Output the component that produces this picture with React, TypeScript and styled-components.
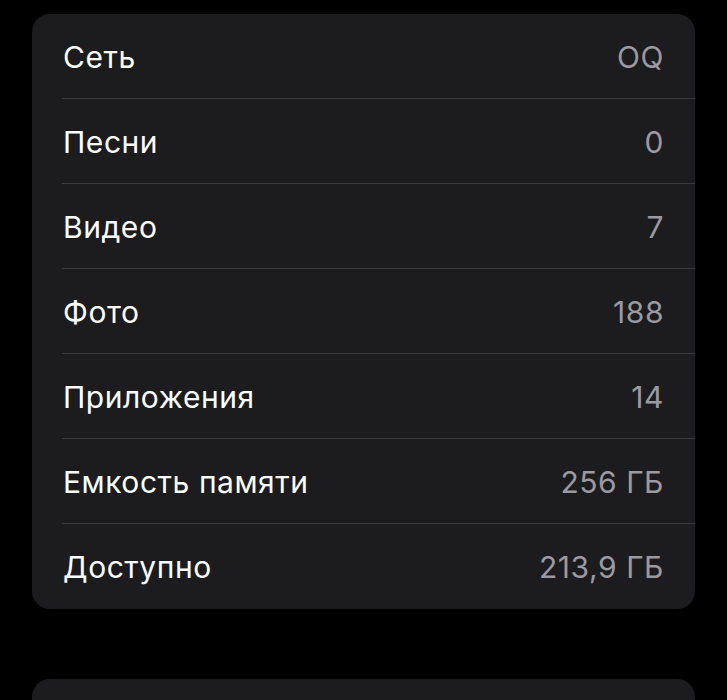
import styled, { createGlobalStyle } from 'styled-components';

const GlobalStyle = createGlobalStyle`
  html, body {
    margin: 0;
    padding: 0;
    background: #000000;
  }
  body {
    font-family: Inter, "Noto Sans", "Liberation Sans", sans-serif;
    -webkit-font-smoothing: antialiased;
  }
`;

const Page = styled.div`
  display: flex;
  flex-direction: column;
  gap: 70px;
  padding: 14px 32px 0;
  height: 700px;
  box-sizing: border-box;
  overflow: hidden;
`;

const Card = styled.div`
  background: #1c1c1e;
  border-radius: 18px;
  padding-left: 30px;
  flex-shrink: 0;
`;

const Row = styled.div<{ $last?: boolean }>`
  height: 85px;
  box-sizing: border-box;
  display: flex;
  align-items: center;
  justify-content: space-between;
  padding: 1px 32px 0 1px;
  border-bottom: ${(p) => (p.$last ? 'none' : '1px solid #3a3a3c')};
  font-size: 30px;
  letter-spacing: 0.55px;
`;

const Label = styled.span`
  color: #ffffff;
`;

const Value = styled.span`
  color: #9a9aa0;
  margin-right: -1px;
`;

const rows = [
  ['Сеть', 'OQ'],
  ['Песни', '0'],
  ['Видео', '7'],
  ['Фото', '188'],
  ['Приложения', '14'],
  ['Емкость памяти', '256 ГБ'],
  ['Доступно', '213,9 ГБ'],
];

const App = () => {
  return (
    <>
      <GlobalStyle />
      <Page>
        <Card>
          {rows.map(([label, value], i) => (
            <Row key={label} $last={i === rows.length - 1}>
              <Label>{label}</Label>
              <Value>{value}</Value>
            </Row>
          ))}
        </Card>
        <Card>
          <Row $last />
        </Card>
      </Page>
    </>
  );
};

export default App;
